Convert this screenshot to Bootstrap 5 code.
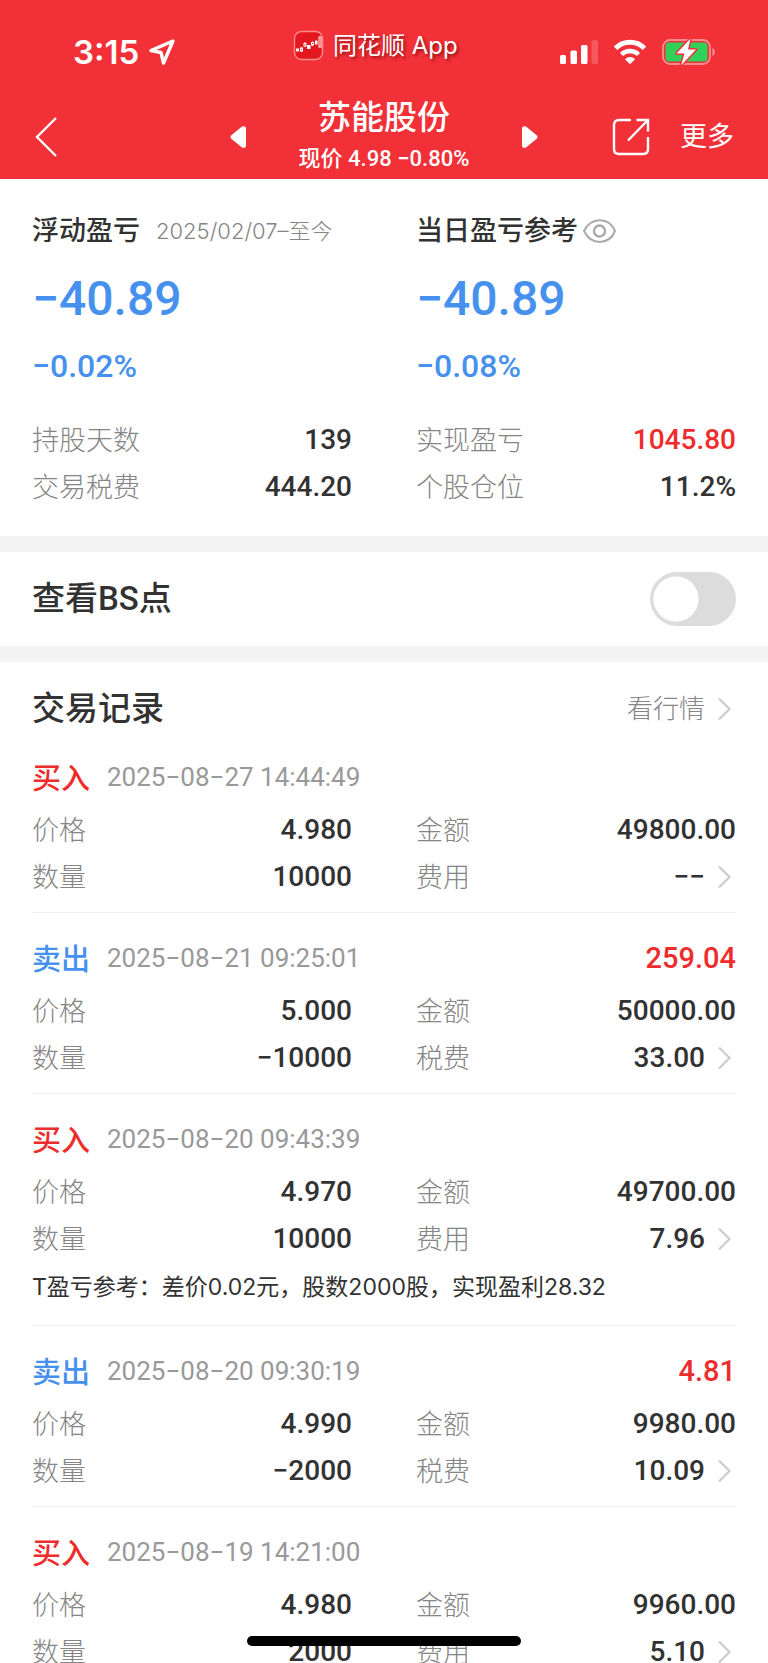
<!DOCTYPE html>
<html lang="zh-CN">
<head>
<meta charset="utf-8">
<meta name="viewport" content="width=device-width, initial-scale=1">
<title>苏能股份</title>
<link href="https://cdn.jsdelivr.net/npm/bootstrap@5.3.0/dist/css/bootstrap.min.css" rel="stylesheet">
<style>
  :root { --brand: #f23038; --up: #ee2c2c; --down: #4691ee; --ink: #323232; --mute: #999; --mute-thin: #858585; }
  body { font-family: Roboto, "Noto Sans CJK SC", sans-serif; font-size: 27px; color: var(--ink); background: #fff; }
  .page-x { padding-left: 32px; padding-right: 32px; }
  .app-head { background: var(--brand); color: #fff; }
  .status { height: 92px; padding: 12px 52px 0 73px; font-family: Inter, "Noto Sans CJK SC", sans-serif; }
  .status-time { width: 220px; font-size: 33px; font-weight: 600; line-height: 1; }
  .status-app { font-size: 24px; line-height: 32px; margin-bottom: 12px; text-shadow: 2px 2px 3px rgba(90, 0, 0, .6); }
  .nav-grid { display: grid; grid-template-columns: 1fr 44% 1fr; align-items: center; padding: 4px 34px 1px; }
  .bare { background: none; border: 0; padding: 0; color: inherit; line-height: 1; }
  .more-btn { margin-left: 30px; }
  .stock { font-size: 33px; font-weight: 500; line-height: 44px; margin: 0; }
  .quote { font-size: 22px; font-weight: 500; line-height: 38px; }
  .pair { --bs-gutter-x: 64px; }
  .sum { padding-top: 28px; padding-bottom: 26px; }
  .sum-title { font-size: 27px; font-weight: 500; line-height: 48px; margin: 0; }
  .period { font-size: 22px; font-weight: 300; color: var(--mute-thin); font-family: Inter, "Noto Sans CJK SC", sans-serif; }
  .big { font-size: 48px; font-weight: 500; line-height: 88px; }
  .pct { font-size: 32px; font-weight: 500; line-height: 46px; margin-bottom: 27px; }
  .kv { line-height: 47px; margin: 0; }
  .kv dt { font-weight: 300; color: var(--mute-thin); padding-top: 2px; margin-bottom: -2px; }
  .kv dd { font-size: 28px; font-weight: 500; margin: 0; }
  .band { height: 16px; background: #f4f4f4; flex: none; }
  .up { color: var(--up); }
  .down { color: var(--down); }
  .h-sec { font-size: 33px; font-weight: 500; line-height: 46px; margin: 0; font-family: Roboto, "Noto Sans CJK SC", sans-serif; }
  .bs-row { height: 94px; }
  .bs-row .form-check-input { width: 86px; height: 54px; margin: 0; border: 0; background-color: #dcdcdc; background-image: radial-gradient(circle closest-side, #fff 22px, transparent 23px); background-size: 52px 54px; background-position: left center; border-radius: 27px; }
  .bs-row .form-check-input:checked { background-color: var(--brand); background-position: right center; }
  .rec-head { padding-top: 24px; }
  .more-link { font-size: 26px; font-weight: 300; color: var(--mute-thin); text-decoration: none; }
  .rec { padding: 22px 0 12px; border-bottom: 1px solid #f2f2f2; }
  .rec-title { line-height: 46px; margin-bottom: 6px; }
  .side { font-size: 29px; font-weight: 500; width: 75px; padding-top: 2px; margin-bottom: -2px; }
  .stamp { font-size: 26px; color: var(--mute); }
  .gain { font-size: 29px; font-weight: 500; }
  .note { font-size: 23px; line-height: 51px; margin: 0; font-family: Inter, "Noto Sans CJK SC", sans-serif; }
  .home-bar { position: fixed; bottom: 17px; left: 50%; margin-left: -137px; width: 274px; height: 10px; border-radius: 5px; background: #000; }
  svg { display: block; flex: none; }
</style>
</head>
<body class="vh-100 d-flex flex-column overflow-hidden">
<svg width="0" height="0" class="position-absolute" aria-hidden="true">
  <symbol id="go" viewBox="2 0 31 24"><path d="M16 1.500 26.500 12 16 22.500" fill="none" stroke="#ccc" stroke-width="2.200"/></symbol>
</svg>

<header class="app-head flex-shrink-0">
  <div class="status d-flex align-items-center">
    <div class="status-time d-flex align-items-center">
      <span>3:15</span>
      <svg class="ms-2" width="30" height="28" viewBox="0 0 30 28"><path d="M26 3 4 12.500 14 14.500 16.500 25Z" fill="none" stroke="#fff" stroke-width="3.400" stroke-linejoin="round"/></svg>
    </div>
    <div class="status-app d-flex align-items-center">
      <svg class="me-2" width="32" height="32" viewBox="0 0 32 32"><rect x="1.500" y="1.500" width="28" height="28" rx="7" fill="#e3181f" stroke="#ff8d8d" stroke-width="1.400"/><g fill="#fff"><rect x="3" y="18.500" width="3" height="3"/><rect x="14" y="15" width="3.500" height="4"/><rect x="22" y="10.500" width="2.500" height="4"/></g><g fill="#e3181f" stroke="#fff" stroke-width="1"><path d="M8.500 17v5M12 12v5M19.500 11.500v4.500"/><rect x="7.500" y="18" width="2" height="3"/><rect x="11" y="13.500" width="2" height="2.500"/><rect x="18.500" y="12.500" width="2" height="2.500"/><rect x="26" y="7" width="2" height="10"/></g></svg>
      <span>同花顺 App</span>
    </div>
    <div class="ms-auto d-flex align-items-center">
      <svg class="me-3" width="38" height="26" viewBox="0 0 38 26" fill="#fff"><rect x="0" y="16" width="6" height="9" rx="1.500"/><rect x="10.500" y="11.500" width="6.500" height="13.500" rx="1.500"/><rect x="21" y="6" width="6.500" height="19" rx="1.500"/><rect x="31.500" y="1" width="6.500" height="24" rx="1.500" opacity=".2"/></svg>
      <svg class="me-3" width="32" height="26" viewBox="0 0 32 26"><g fill="none" stroke="#fff" stroke-width="5"><path d="M1.500 9.200A20.500 20.500 0 0 1 30.500 9.200"/><path d="M7.500 15.500A12 12 0 0 1 24.500 15.500" stroke-width="4.500"/></g><path d="M11 20.200A7 7 0 0 1 21 20.200L16 25.300Z" fill="#fff"/></svg>
      <svg width="54" height="28" viewBox="0 0 54 28"><rect x="1" y="2" width="47" height="24" rx="7" fill="none" stroke="#fff" stroke-opacity=".45" stroke-width="1.800"/><path d="M50.500 10v8c3-1.400 3-6.600 0-8Z" fill="#fff" fill-opacity=".5"/><rect x="3.500" y="4.500" width="42" height="19" rx="4" fill="#30d158"/><path d="M28.500.500 14.500 15.500h8L19 27.500 34 11.500h-8Z" fill="#fff" stroke="#f23038" stroke-width="3" paint-order="stroke" stroke-linejoin="round"/></svg>
    </div>
  </div>
  <nav class="nav-grid" aria-label="个股">
    <div><button type="button" class="bare d-block" aria-label="返回"><svg width="26" height="42" viewBox="0 0 26 42"><path d="M22 2 3 21 22 40" fill="none" stroke="#fff" stroke-width="2.400"/></svg></button></div>
    <div class="d-flex justify-content-between align-items-center">
      <button type="button" class="bare" aria-label="上一只"><svg width="17" height="24" viewBox="0 0 17 24"><path d="M1 10.500 12 1.600Q16 0 16 4V20Q16 24 12 22.400L1 13.500Q0 12 1 10.500Z" fill="#fff"/></svg></button>
      <div class="text-center text-nowrap"><h1 class="stock">苏能股份</h1><div class="quote">现价 4.98 −0.80%</div></div>
      <button type="button" class="bare" aria-label="下一只"><svg width="17" height="24" viewBox="0 0 17 24"><path d="M16 10.500 5 1.600Q1 0 1 4V20Q1 24 5 22.400L16 13.500Q17 12 16 10.500Z" fill="#fff"/></svg></button>
    </div>
    <div class="d-flex justify-content-end align-items-center">
      <button type="button" class="bare" aria-label="分享"><svg width="38" height="38" viewBox="0 0 38 38" fill="none" stroke="#fff" stroke-width="2.400"><path d="M19 2H7Q2 2 2 7V31Q2 36 7 36H31Q36 36 36 31V19M24.500 2H36V13.500M36 2 16 22.500"/></svg></button>
      <button type="button" class="bare more-btn">更多</button>
    </div>
  </nav>
</header>

<main class="flex-grow-1 overflow-hidden">
  <section class="sum page-x">
    <div class="row pair">
      <div class="col-6">
        <div class="d-flex align-items-center text-nowrap"><h2 class="sum-title me-3">浮动盈亏</h2><span class="period">2025/02/07–至今</span></div>
        <div class="big down">−40.89</div>
        <div class="pct down">−0.02%</div>
        <dl class="kv">
          <div class="d-flex justify-content-between"><dt>持股天数</dt><dd>139</dd></div>
          <div class="d-flex justify-content-between"><dt>交易税费</dt><dd>444.20</dd></div>
        </dl>
      </div>
      <div class="col-6">
        <div class="d-flex align-items-center text-nowrap"><h2 class="sum-title">当日盈亏参考</h2>
          <button type="button" class="bare ms-1" aria-label="显示或隐藏"><svg width="36" height="26" viewBox="0 0 36 26" fill="none" stroke="#aaa" stroke-width="2"><path d="M2 13C9-1.500 27-1.500 33 13 27 27.500 9 27.500 2 13Z"/><circle cx="17.500" cy="13" r="5.500" stroke-width="2.400"/></svg></button></div>
        <div class="big down">−40.89</div>
        <div class="pct down">−0.08%</div>
        <dl class="kv">
          <div class="d-flex justify-content-between"><dt>实现盈亏</dt><dd class="up">1045.80</dd></div>
          <div class="d-flex justify-content-between"><dt>个股仓位</dt><dd>11.2%</dd></div>
        </dl>
      </div>
    </div>
  </section>

  <div class="band"></div>
  <section class="bs-row page-x d-flex align-items-center justify-content-between">
    <label class="h-sec" for="bs">查看BS点</label>
    <input class="form-check-input" type="checkbox" role="switch" id="bs">
  </section>
  <div class="band"></div>

  <section class="page-x">
    <div class="rec-head d-flex align-items-center justify-content-between">
      <h2 class="h-sec">交易记录</h2>
      <a href="#" class="more-link d-flex align-items-center">看行情<svg width="31" height="24"><use href="#go"/></svg></a>
    </div>

    <article class="rec">
      <div class="rec-title d-flex align-items-center"><span class="side up">买入</span><time class="stamp">2025−08−27 14:44:49</time></div>
      <div class="row pair">
        <dl class="kv col-6">
          <div class="d-flex justify-content-between"><dt>价格</dt><dd>4.980</dd></div>
          <div class="d-flex justify-content-between"><dt>数量</dt><dd>10000</dd></div>
        </dl>
        <dl class="kv col-6">
          <div class="d-flex justify-content-between"><dt>金额</dt><dd>49800.00</dd></div>
          <div class="d-flex justify-content-between"><dt>费用</dt><dd class="d-flex align-items-center">−−<svg width="31" height="24"><use href="#go"/></svg></dd></div>
        </dl>
      </div>
    </article>

    <article class="rec">
      <div class="rec-title d-flex align-items-center"><span class="side down">卖出</span><time class="stamp">2025−08−21 09:25:01</time><span class="gain up ms-auto">259.04</span></div>
      <div class="row pair">
        <dl class="kv col-6">
          <div class="d-flex justify-content-between"><dt>价格</dt><dd>5.000</dd></div>
          <div class="d-flex justify-content-between"><dt>数量</dt><dd>−10000</dd></div>
        </dl>
        <dl class="kv col-6">
          <div class="d-flex justify-content-between"><dt>金额</dt><dd>50000.00</dd></div>
          <div class="d-flex justify-content-between"><dt>税费</dt><dd class="d-flex align-items-center">33.00<svg width="31" height="24"><use href="#go"/></svg></dd></div>
        </dl>
      </div>
    </article>

    <article class="rec">
      <div class="rec-title d-flex align-items-center"><span class="side up">买入</span><time class="stamp">2025−08−20 09:43:39</time></div>
      <div class="row pair">
        <dl class="kv col-6">
          <div class="d-flex justify-content-between"><dt>价格</dt><dd>4.970</dd></div>
          <div class="d-flex justify-content-between"><dt>数量</dt><dd>10000</dd></div>
        </dl>
        <dl class="kv col-6">
          <div class="d-flex justify-content-between"><dt>金额</dt><dd>49700.00</dd></div>
          <div class="d-flex justify-content-between"><dt>费用</dt><dd class="d-flex align-items-center">7.96<svg width="31" height="24"><use href="#go"/></svg></dd></div>
        </dl>
      </div>
      <p class="note">T盈亏参考：差价0.02元，股数2000股，实现盈利28.32</p>
    </article>

    <article class="rec">
      <div class="rec-title d-flex align-items-center"><span class="side down">卖出</span><time class="stamp">2025−08−20 09:30:19</time><span class="gain up ms-auto">4.81</span></div>
      <div class="row pair">
        <dl class="kv col-6">
          <div class="d-flex justify-content-between"><dt>价格</dt><dd>4.990</dd></div>
          <div class="d-flex justify-content-between"><dt>数量</dt><dd>−2000</dd></div>
        </dl>
        <dl class="kv col-6">
          <div class="d-flex justify-content-between"><dt>金额</dt><dd>9980.00</dd></div>
          <div class="d-flex justify-content-between"><dt>税费</dt><dd class="d-flex align-items-center">10.09<svg width="31" height="24"><use href="#go"/></svg></dd></div>
        </dl>
      </div>
    </article>

    <article class="rec">
      <div class="rec-title d-flex align-items-center"><span class="side up">买入</span><time class="stamp">2025−08−19 14:21:00</time></div>
      <div class="row pair">
        <dl class="kv col-6">
          <div class="d-flex justify-content-between"><dt>价格</dt><dd>4.980</dd></div>
          <div class="d-flex justify-content-between"><dt>数量</dt><dd>2000</dd></div>
        </dl>
        <dl class="kv col-6">
          <div class="d-flex justify-content-between"><dt>金额</dt><dd>9960.00</dd></div>
          <div class="d-flex justify-content-between"><dt>费用</dt><dd class="d-flex align-items-center">5.10<svg width="31" height="24"><use href="#go"/></svg></dd></div>
        </dl>
      </div>
    </article>
  </section>
</main>
<div class="home-bar"></div>
<script src="https://cdn.jsdelivr.net/npm/bootstrap@5.3.0/dist/js/bootstrap.bundle.min.js"></script>
</body>
</html>
